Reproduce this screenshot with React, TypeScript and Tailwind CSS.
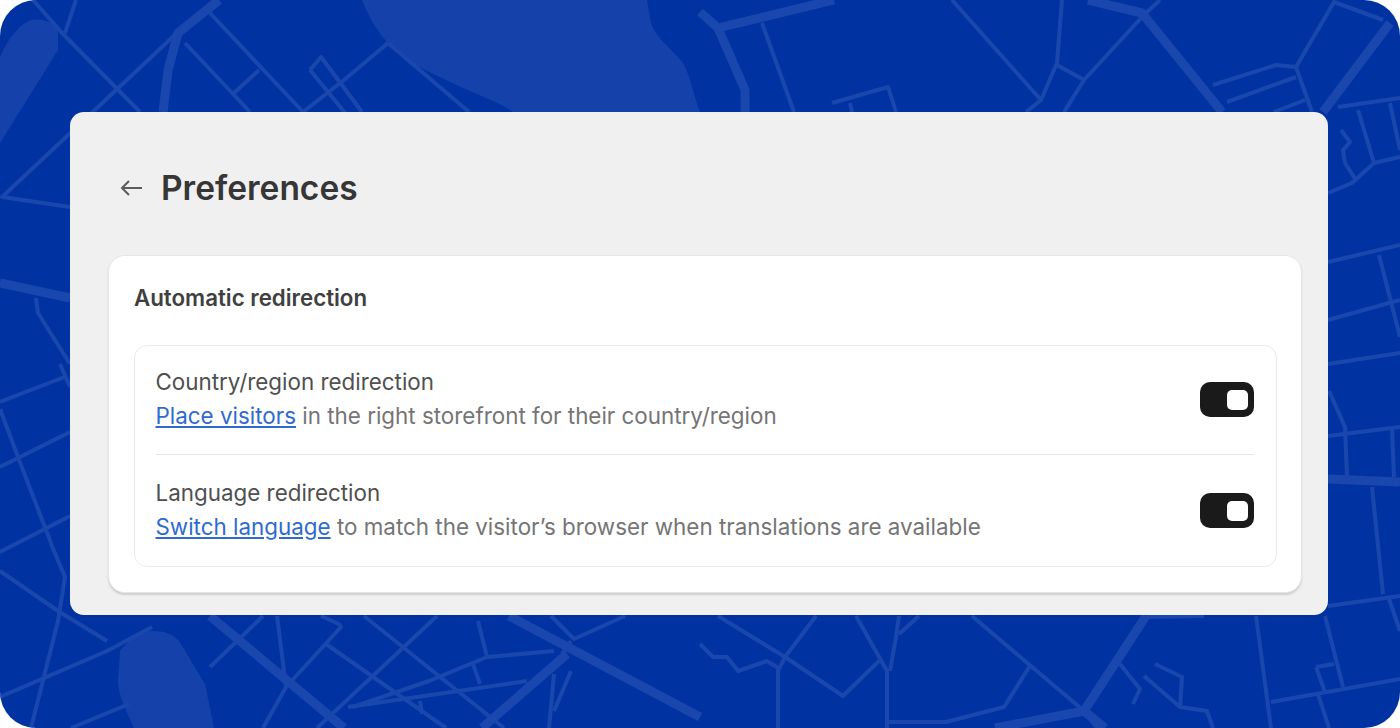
const thinRoads = [
  "33,0 62,33 140,112",
  "76,0 65,33",
  "178,32 2,197 70,207",
  "210,13 303,112",
  "185,43 250,112",
  "259,70 234,93",
  "388,43 344,80 303,112",
  "310,70 321,57 362,112",
  "310,70 355,125",
  "388,43 469,112",
  "36,298 38,313 70,364",
  "762,23 794,112",
  "952,0 1041,100",
  "1062,0 1057,63 1041,100 1026,112",
  "1057,65 1084,80",
  "1142,17 1084,80 1064,112",
  "1146,13 1160,0",
  "1213,85 1276,65 1296,67 1334,2 1383,20",
  "1227,102 1296,77",
  "1296,67 1312,112",
  "1274,112 1305,100",
  "832,103 888,87 896,112",
  "850,103 852,112",
  "1338,107 1400,98",
  "1358,110 1374,163 1400,157",
  "1390,103 1400,150",
  "1374,163 1352,183 1328,193",
  "1341,130 1350,142 1343,150 1345,163 1356,180",
  "1328,262 1400,245",
  "1379,255 1400,337",
  "1328,320 1400,300",
  "1328,364 1400,353",
  "0,402 67,376",
  "0,467 70,432",
  "0,552 70,516",
  "60,364 70,387",
  "0,409 18,457 54,551 65,577 58,621 31,728",
  "0,571 58,611 107,641",
  "0,697 107,651 152,627",
  "129,704 71,728",
  "277,616 286,687 263,728",
  "263,616 210,667",
  "321,616 339,624 341,627 286,687",
  "326,644 446,728",
  "364,616 504,728",
  "437,616 317,728",
  "478,621 487,657",
  "554,651 487,657 429,681 353,707",
  "527,681 348,707",
  "473,664 480,684",
  "420,701 422,714",
  "571,641 562,654",
  "551,616 574,639 625,616",
  "554,674 549,728",
  "571,671 554,711",
  "718,616 785,657 843,696 879,661",
  "816,616 785,657 778,671 778,728",
  "700,644 713,657 727,657 738,671 767,661 780,669",
  "856,616 887,671 887,728",
  "899,616 896,637 890,671",
  "919,616 899,634",
  "972,616 1084,711 1097,728",
  "1030,666 1004,707 946,722 887,722",
  "1146,617 1204,616",
  "1120,664 1140,689 1133,704",
  "1155,664 1182,677 1180,707 1207,711 1213,728",
  "1144,676 1180,707",
  "1256,616 1271,728",
  "1325,616 1343,687",
  "1271,702 1400,679",
  "1316,667 1334,664",
  "1316,667 1325,692",
  "1318,694 1329,728",
  "1329,391 1345,427 1347,477",
  "1328,436 1400,427",
  "1392,429 1394,477",
  "1372,487 1383,594",
  "1328,606 1400,596",
  "1388,596 1400,631",
];

const wideRoads = [
  "219,0 178,33 168,70 163,112",
  "0,283 70,298",
  "834,0 718,28 745,90 745,112",
  "700,12 718,28",
  "1088,0 1142,13 1222,112",
  "1390,23 1323,112",
  "210,616 344,728",
  "509,616 700,717",
  "567,654 482,728",
  "1146,616 1084,711 995,728",
  "1084,711 1105,728",
  "1328,479 1400,482",
];

const CityMap = () => (
  <svg
    xmlns="http://www.w3.org/2000/svg"
    viewBox="0 0 1400 728"
    fill="none"
    className="absolute inset-0 h-full w-full"
  >
    <path
      d="M362 0 C370 20 378 32 388 43 C410 65 430 72 446 80 C470 92 495 100 513 112 L700 112 C692 90 690 75 683 63 C668 45 652 35 650 18 L647 0 Z"
      fill="#1541ab"
    />
    <path
      d="M0 57 C8 38 20 24 31 20 C45 18 58 24 58 33 L58 50 L0 143 Z"
      fill="#1541ab"
    />
    <path
      d="M120 651 C128 640 140 631 152 631 C165 631 172 634 179 641 L205 684 L214 728 L134 728 C126 710 118 695 118 681 Z"
      fill="#1541ab"
    />
    {thinRoads.map((points) => (
      <polyline key={points} points={points} stroke="#1a47ad" strokeWidth="4" strokeLinejoin="round" />
    ))}
    {wideRoads.map((points) => (
      <polyline key={points} points={points} stroke="#1a47ad" strokeWidth="9" strokeLinejoin="round" />
    ))}
  </svg>
);

const BackArrow = () => (
  <svg
    xmlns="http://www.w3.org/2000/svg"
    viewBox="0 0 22 16"
    fill="none"
    stroke="#5c5c5c"
    strokeWidth="2"
    className="h-4 w-[22px]"
  >
    <path d="M22 8H2M9 1L2 8l7 7" />
  </svg>
);

const Toggle = () => (
  <div className="mt-[1px] flex h-[35px] w-[54px] shrink-0 items-center justify-end rounded-[10px] bg-[#1a1a1a] pr-[6px]">
    <div className="h-[20px] w-[21px] rounded-[5px] bg-white" />
  </div>
);

interface IRedirectRowProps {
  title: string;
  link: string;
  text: string;
}

const RedirectRow = ({ title, link, text }: IRedirectRowProps) => (
  <div className="flex items-center justify-between">
    <div>
      <p className="h-[34px] text-[22.4px] leading-[34px] text-[#505050]">{title}</p>
      <p className="h-[34px] text-[22.4px] leading-[34px] text-[#757575]">
        <span className="text-[#2f6bcf] underline">{link}</span> {text}
      </p>
    </div>
    <Toggle />
  </div>
);

const App = () => {
  return (
    <div className="h-[728px] w-[1400px] overflow-hidden bg-white font-['Inter',sans-serif]">
      <div className="relative h-full w-full overflow-hidden rounded-[36px] bg-[#0033a1] pl-[70px] pt-[112px]">
        <CityMap />
        <div className="relative flex h-[503px] w-[1258px] flex-col rounded-[14px] bg-[#f0f0f1] pl-[38px] pr-[26px] pt-[52px]">
          <div className="flex h-[48px] items-center gap-[19px] pl-[12px]">
            <BackArrow />
            <h1 className="text-[33.5px] font-semibold leading-[48px] text-[#363636]">Preferences</h1>
          </div>
          <div className="mt-[43px] h-[338px] rounded-[17px] border border-[#e6e6e6] bg-white pl-[25px] pr-[24px] pt-[25px] shadow-[0_2px_2px_rgba(0,0,0,0.14)]">
            <h2 className="h-[34px] text-[22.3px] font-semibold leading-[34px] text-[#404040]">Automatic redirection</h2>
            <div className="mt-[30px] flex h-[222px] flex-col rounded-[13px] border border-[#ebebeb] pl-[20.5px] pr-[22px] pt-[19px]">
              <RedirectRow
                title="Country/region redirection"
                link="Place visitors"
                text="in the right storefront for their country/region"
              />
              <div className="mb-[21px] mt-[21px] h-px bg-[#e6e6e6]" />
              <RedirectRow
                title="Language redirection"
                link="Switch language"
                text="to match the visitor’s browser when translations are available"
              />
            </div>
          </div>
        </div>
      </div>
    </div>
  );
};

export default App;
